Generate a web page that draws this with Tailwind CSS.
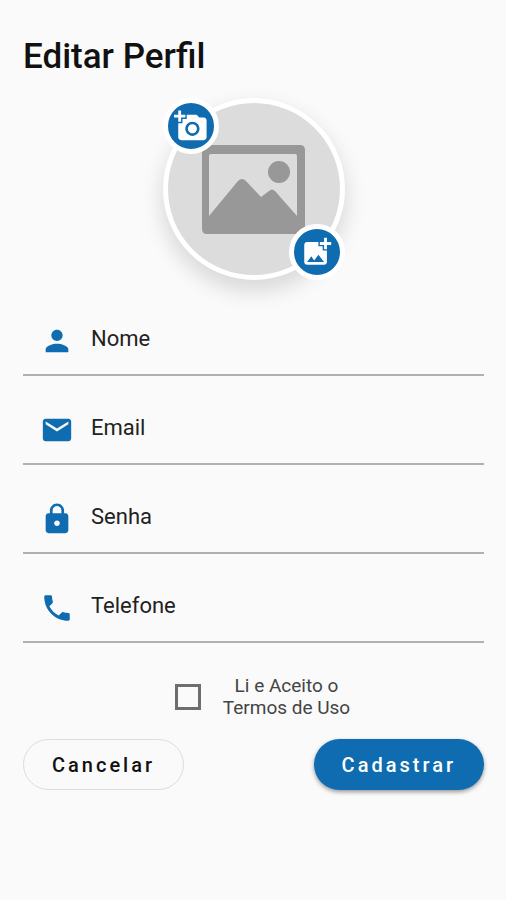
<!DOCTYPE html>
<html lang="pt-BR">
<head>
<meta charset="utf-8">
<meta name="viewport" content="width=device-width, initial-scale=1">
<title>Editar Perfil</title>
<script src="https://cdn.jsdelivr.net/npm/@tailwindcss/browser@4"></script>
</head>
<body class="min-h-screen bg-[#fafafa] font-[Roboto,sans-serif] text-[#111]">
<main class="pt-[33px] pr-[22px] pl-[23px]">
  <h1 class="text-[35px] leading-[48px] font-medium">Editar Perfil</h1>

  <div class="relative mx-auto mt-[17px] size-[182px]">
    <div class="flex size-full items-center justify-center rounded-full border-[5px] border-white bg-[#dcdcdc] shadow-[0_10px_20px_2px_rgba(0,0,0,0.13)]">
      <svg class="h-[89px] w-[103px]" viewBox="0 0 103 89" role="img" aria-label="Foto de perfil">
        <path fill="#989898" fill-rule="evenodd" d="M5 0H98Q103 0 103 5V84Q103 89 98 89H5Q0 89 0 84V5Q0 0 5 0ZM9 9Q7 9 7 11V71L36 36Q40 32 44 36L59 52L67 46Q70 43 73 46L95 71V11Q95 9 93 9Z"/>
        <circle cx="77" cy="27" r="11" fill="#989898"/>
      </svg>
    </div>
    <button type="button" aria-label="Tirar foto" class="absolute top-0 left-0 flex size-14 items-center justify-center rounded-full border-[5px] border-white bg-[#0f6cb0] text-white">
      <svg class="size-[34px] shrink-0" viewBox="0 0 24 24" fill="currentColor" aria-hidden="true"><path d="M3 4V1h2v3h3v2H5v3H3V6H0V4h3zm3 6V7h3V4h7l1.83 2H21c1.1 0 2 .9 2 2v12c0 1.1-.9 2-2 2H5c-1.1 0-2-.9-2-2V10h3zm7 9c2.76 0 5-2.24 5-5s-2.24-5-5-5-5 2.24-5 5 2.24 5 5 5zm-3.2-5c0 1.77 1.43 3.2 3.2 3.2s3.2-1.43 3.2-3.2-1.43-3.2-3.2-3.2-3.2 1.43-3.2 3.2z"/></svg>
    </button>
    <button type="button" aria-label="Escolher imagem" class="absolute right-0 bottom-0 flex size-14 items-center justify-center rounded-full border-[5px] border-white bg-[#0f6cb0] text-white">
      <svg class="size-[34px] shrink-0" viewBox="0 0 24 24" fill="currentColor" aria-hidden="true"><path d="M19 7v2.99s-1.99.01-2 0V7h-3s.01-1.99 0-2h3V2h2v3h3v2h-3zm-3 4V8h-3V5H5c-1.1 0-2 .9-2 2v12c0 1.1.9 2 2 2h12c1.1 0 2-.9 2-2v-8h-3zM5 19l3-4 2 3 3-4 4 5H5z"/></svg>
    </button>
  </div>

  <form>
    <div class="mt-[26px] flex flex-col gap-[19px]">
      <label class="flex h-[70px] items-start gap-[17px] border-b-2 border-[#b0b0b0] pl-[17px]">
        <svg class="mt-[18px] size-[34px] shrink-0 text-[#0f6cb0]" viewBox="0 0 24 24" fill="currentColor" aria-hidden="true"><path d="M12 12c2.21 0 4-1.79 4-4s-1.79-4-4-4-4 1.79-4 4 1.79 4 4 4zm0 2c-2.67 0-8 1.34-8 4v2h16v-2c0-2.66-5.33-4-8-4z"/></svg>
        <input type="text" aria-label="Nome" placeholder="Nome" class="h-16 min-w-0 flex-1 bg-transparent text-[22px] outline-none placeholder:text-[#222]">
      </label>
      <label class="flex h-[70px] items-start gap-[17px] border-b-2 border-[#b0b0b0] pl-[17px]">
        <svg class="mt-[18px] size-[34px] shrink-0 text-[#0f6cb0]" viewBox="0 0 24 24" fill="currentColor" aria-hidden="true"><path d="M20 4H4c-1.1 0-1.99.9-1.99 2L2 18c0 1.1.9 2 2 2h16c1.1 0 2-.9 2-2V6c0-1.1-.9-2-2-2zm0 4l-8 5-8-5V6l8 5 8-5v2z"/></svg>
        <input type="email" aria-label="Email" placeholder="Email" class="h-16 min-w-0 flex-1 bg-transparent text-[22px] outline-none placeholder:text-[#222]">
      </label>
      <label class="flex h-[70px] items-start gap-[17px] border-b-2 border-[#b0b0b0] pl-[17px]">
        <svg class="mt-[18px] size-[34px] shrink-0 text-[#0f6cb0]" viewBox="0 0 24 24" fill="currentColor" aria-hidden="true"><path d="M18 8h-1V6c0-2.760-2.240-5-5-5S7 3.240 7 6v2H6c-1.100 0-2 .9-2 2v10c0 1.100.9 2 2 2h12c1.100 0 2-.9 2-2V10c0-1.100-.9-2-2-2zm-6 9c-1.100 0-2-.9-2-2s.9-2 2-2 2 .9 2 2-.9 2-2 2zm3.100-9H8.900V6c0-1.710 1.390-3.100 3.100-3.100 1.710 0 3.100 1.390 3.100 3.100v2z"/></svg>
        <input type="password" aria-label="Senha" placeholder="Senha" class="h-16 min-w-0 flex-1 bg-transparent text-[22px] outline-none placeholder:text-[#222]">
      </label>
      <label class="flex h-[70px] items-start gap-[17px] border-b-2 border-[#b0b0b0] pl-[17px]">
        <svg class="mt-[18px] size-[34px] shrink-0 text-[#0f6cb0]" viewBox="0 0 24 24" fill="currentColor" aria-hidden="true"><path d="M6.620 10.790c1.440 2.830 3.760 5.140 6.590 6.590l2.200-2.200c.27-.27.67-.36 1.020-.24 1.120.37 2.330.57 3.570.57.55 0 1 .45 1 1V20c0 .55-.45 1-1 1-9.390 0-17-7.610-17-17 0-.55.45-1 1-1h3.500c.55 0 1 .45 1 1 0 1.250.2 2.450.57 3.570.11.35.03.74-.25 1.020l-2.200 2.200z"/></svg>
        <input type="tel" aria-label="Telefone" placeholder="Telefone" class="h-16 min-w-0 flex-1 bg-transparent text-[22px] outline-none placeholder:text-[#222]">
      </label>
    </div>

    <div class="mt-8 flex items-center justify-center gap-[22px] pl-[18px]">
      <input id="termos" type="checkbox" class="size-[26px] appearance-none border-[3px] border-[#6e6e6e] checked:bg-[#0f6cb0]">
      <label for="termos" class="text-center text-[19px] leading-[22px] text-[#444]">Li e Aceito o<br>Termos de Uso</label>
    </div>

    <div class="mt-5 flex items-center justify-between">
      <button type="button" class="h-[51px] rounded-full border border-[#dcdcdc] px-7 text-[20px] font-medium tracking-[3px]">Cancelar</button>
      <button type="submit" class="h-[51px] rounded-full bg-[#0f6cb0] px-7 text-[20px] font-medium tracking-[3px] text-white shadow-[0_2px_4px_rgba(0,0,0,0.4)]">Cadastrar</button>
    </div>
  </form>
</main>
</body>
</html>
